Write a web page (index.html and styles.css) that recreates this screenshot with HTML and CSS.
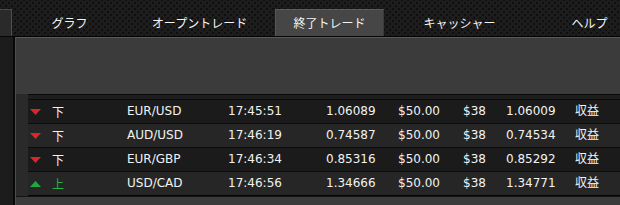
FILE: index.html
```html
<!DOCTYPE html>
<html lang="ja">
<head>
<meta charset="utf-8">
<title>終了トレード</title>
<link rel="stylesheet" href="styles.css">
</head>
<body>
<div class="app">
  <header class="topbar">
    <div class="stub"></div>
    <nav class="tabs">
      <div class="tab">グラフ</div>
      <div class="tab">オープントレード</div>
      <div class="tab active">終了トレード</div>
      <div class="tab">キャッシャー</div>
      <div class="tab">ヘルプ</div>
    </nav>
  </header>
  <main class="main">
    <div class="side"></div>
    <section class="panel">
      <div class="panel-top"></div>
      <div class="table-wrap">
        <div class="table">
          <div class="thead"></div>
          <div class="row odd">
            <span class="c-arrow"><svg class="tri" width="11" height="6" viewBox="0 0 11 6"><polygon points="0,0 11,0 5.5,6" fill="#d8262a"/></svg></span>
            <span class="c-dir">下</span>
            <span>EUR/USD</span>
            <span>17:45:51</span>
            <span>1.06089</span>
            <span>$50.00</span>
            <span>$38</span>
            <span>1.06009</span>
            <span>収益</span>
          </div>
          <div class="row even">
            <span class="c-arrow"><svg class="tri" width="11" height="6" viewBox="0 0 11 6"><polygon points="0,0 11,0 5.5,6" fill="#d8262a"/></svg></span>
            <span class="c-dir">下</span>
            <span>AUD/USD</span>
            <span>17:46:19</span>
            <span>0.74587</span>
            <span>$50.00</span>
            <span>$38</span>
            <span>0.74534</span>
            <span>収益</span>
          </div>
          <div class="row odd">
            <span class="c-arrow"><svg class="tri" width="11" height="6" viewBox="0 0 11 6"><polygon points="0,0 11,0 5.5,6" fill="#d8262a"/></svg></span>
            <span class="c-dir">下</span>
            <span>EUR/GBP</span>
            <span>17:46:34</span>
            <span>0.85316</span>
            <span>$50.00</span>
            <span>$38</span>
            <span>0.85292</span>
            <span>収益</span>
          </div>
          <div class="row even">
            <span class="c-arrow"><svg class="tri" width="11" height="6" viewBox="0 0 11 6"><polygon points="0,6 11,6 5.5,0" fill="#21a83e"/></svg></span>
            <span class="c-dir up">上</span>
            <span>USD/CAD</span>
            <span>17:46:56</span>
            <span>1.34666</span>
            <span>$50.00</span>
            <span>$38</span>
            <span>1.34771</span>
            <span>収益</span>
          </div>
        </div>
      </div>
    </section>
  </main>
</div>
</body>
</html>
```

FILE: styles.css
```css
* { box-sizing: border-box; }

html, body {
  margin: 0;
  padding: 0;
  background: #1c1c1c;
}

body {
  width: 620px;
  height: 205px;
  overflow: hidden;
  font-family: "DejaVu Sans", "Noto Sans CJK JP", sans-serif;
  font-size: 12px;
  color: #f2f2f2;
}

.app {
  display: flex;
  flex-direction: column;
  height: 205px;
}

.topbar {
  height: 36px;
  display: flex;
  align-items: flex-end;
  background-color: #1d1d1d;
  background-image:
    radial-gradient(circle, #0f0f0f 0.9px, transparent 1.6px),
    radial-gradient(circle, #0f0f0f 0.9px, transparent 1.6px);
  background-size: 6px 6px, 6px 6px;
  background-position: 0 0, 3px 3px;
  flex: none;
  overflow: hidden;
}

.stub {
  width: 12px;
  height: 27px;
  background: #2a2a2a;
  border-top: 1px solid #4a4a4a;
  border-right: 1px solid #4f4f4f;
  flex: none;
}

.tabs {
  display: flex;
  gap: 21px;
  margin-left: 3px;
  flex: none;
}

.tab {
  width: 109px;
  height: 27px;
  line-height: 27px;
  text-align: center;
  font-family: "Noto Sans CJK JP", sans-serif;
  font-size: 12px;
  color: #f4f4f4;
  flex: none;
}

.tab.active {
  background: #464646;
  border-top: 1px solid #5c5c5c;
  border-left: 1px solid #555;
  border-right: 1px solid #3a3a3a;
  line-height: 26px;
}

.main {
  flex: 1;
  display: flex;
  border-top: 1px solid #050505;
}

.side {
  width: 15px;
  background: #1c1c1c;
  border-right: 2px solid #080808;
  flex: none;
}

.panel {
  flex: 1;
  background: #3b3b3b;
  border-top: 1px solid #585858;
  border-left: 1px solid #4e4e4e;
  display: flex;
  flex-direction: column;
}

.panel-top {
  height: 56px;
  flex: none;
}

.table-wrap {
  background: #2a2a2a;
  padding-left: 12px;
  border-bottom: 1px solid #141414;
}

.table {
  border-top: 1px solid #0a0a0a;
  border-bottom: 1px solid #050505;
  background: #1e1e1e;
}

.thead {
  height: 4px;
  background: #1e1e1e;
}

.row {
  display: grid;
  grid-template-columns: 24px 75px 101px 98px 72px 65px 43px 69px 1fr;
  height: 24px;
  line-height: 23px;
  border-top: 1px solid #0b0b0b;
  white-space: nowrap;
}

.row.odd { background: #1b1b1b; }
.row.even { background: #262626; }

.c-arrow {
  padding-left: 2px;
  display: flex;
  align-items: center;
}

.tri { display: block; }

.c-dir {
  font-family: "Noto Sans CJK JP", sans-serif;
  color: #f4f4f4;
}

.c-dir.up { color: #25b445; }
```
